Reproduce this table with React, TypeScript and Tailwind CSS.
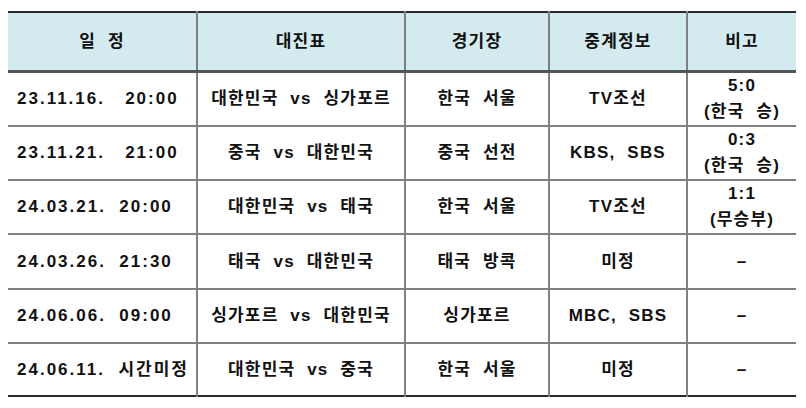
const rows: [string, string, string, string, string[]][] = [
  ["23.11.16.   20:00", "대한민국 vs 싱가포르", "한국 서울", "TV조선", ["5:0", "(한국 승)"]],
  ["23.11.21.   21:00", "중국 vs 대한민국", "중국 선전", "KBS,  SBS", ["0:3", "(한국 승)"]],
  ["24.03.21.  20:00", "대한민국 vs 태국", "한국 서울", "TV조선", ["1:1", "(무승부)"]],
  ["24.03.26.  21:30", "태국 vs 대한민국", "태국 방콕", "미정", ["–"]],
  ["24.06.06.  09:00", "싱가포르 vs 대한민국", "싱가포르", "MBC,  SBS", ["–"]],
  ["24.06.11.  시간미정", "대한민국 vs 중국", "한국 서울", "미정", ["–"]],
];

const heights = ["h-[55px]", "h-[54px]", "h-[53px]", "h-[55px]", "h-[54px]", "h-[53px]"];

export default function App() {
  return (
    <div className="w-[806px] h-[408px] bg-white pt-[11px] pl-[8px]">
      <table
        className="w-[788px] table-fixed border-collapse text-[17px] tracking-[1.2px] text-[#111] font-semibold"
        style={{ fontFamily: '"Liberation Sans", "Noto Sans CJK KR", sans-serif' }}
      >
        <colgroup>
          <col className="w-[189px]" />
          <col className="w-[208px]" />
          <col className="w-[144px]" />
          <col className="w-[138px]" />
          <col className="w-[109px]" />
        </colgroup>
        <thead>
          <tr className="h-[59px] bg-[#d3ebee] border-t-2 border-t-[#2a2a2a] border-b-[3px] border-b-[#555]">
            <th className="font-semibold text-center whitespace-pre">일  정</th>
            <th className="font-semibold text-center border-l-2 border-l-[#808080]">대진표</th>
            <th className="font-semibold text-center border-l-2 border-l-[#808080]">경기장</th>
            <th className="font-semibold text-center border-l-2 border-l-[#808080]">중계정보</th>
            <th className="font-semibold text-center border-l-2 border-l-[#808080]">비고</th>
          </tr>
        </thead>
        <tbody>
          {rows.map((r, i) => (
            <tr
              key={i}
              className={
                heights[i] +
                (i === rows.length - 1
                  ? " border-b-2 border-b-[#2a2a2a]"
                  : " border-b-2 border-b-[#808080]")
              }
            >
              <td className="pl-[9px] whitespace-pre tracking-[2px]">{r[0]}</td>
              <td className="text-center whitespace-pre border-l-2 border-l-[#808080]">
                {r[1].replace(/ vs /, "  vs  ")}
              </td>
              <td className="text-center whitespace-pre border-l-2 border-l-[#808080]">
                {r[2].replace(" ", "  ")}
              </td>
              <td className="text-center whitespace-pre border-l-2 border-l-[#808080]">
                {r[3]}
              </td>
              <td className="text-center leading-[26px] border-l-2 border-l-[#808080]">
                {r[4].map((t, j) => (
                  <div key={j} className="whitespace-pre">
                    {t.replace(" ", "  ")}
                  </div>
                ))}
              </td>
            </tr>
          ))}
        </tbody>
      </table>
    </div>
  );
}
